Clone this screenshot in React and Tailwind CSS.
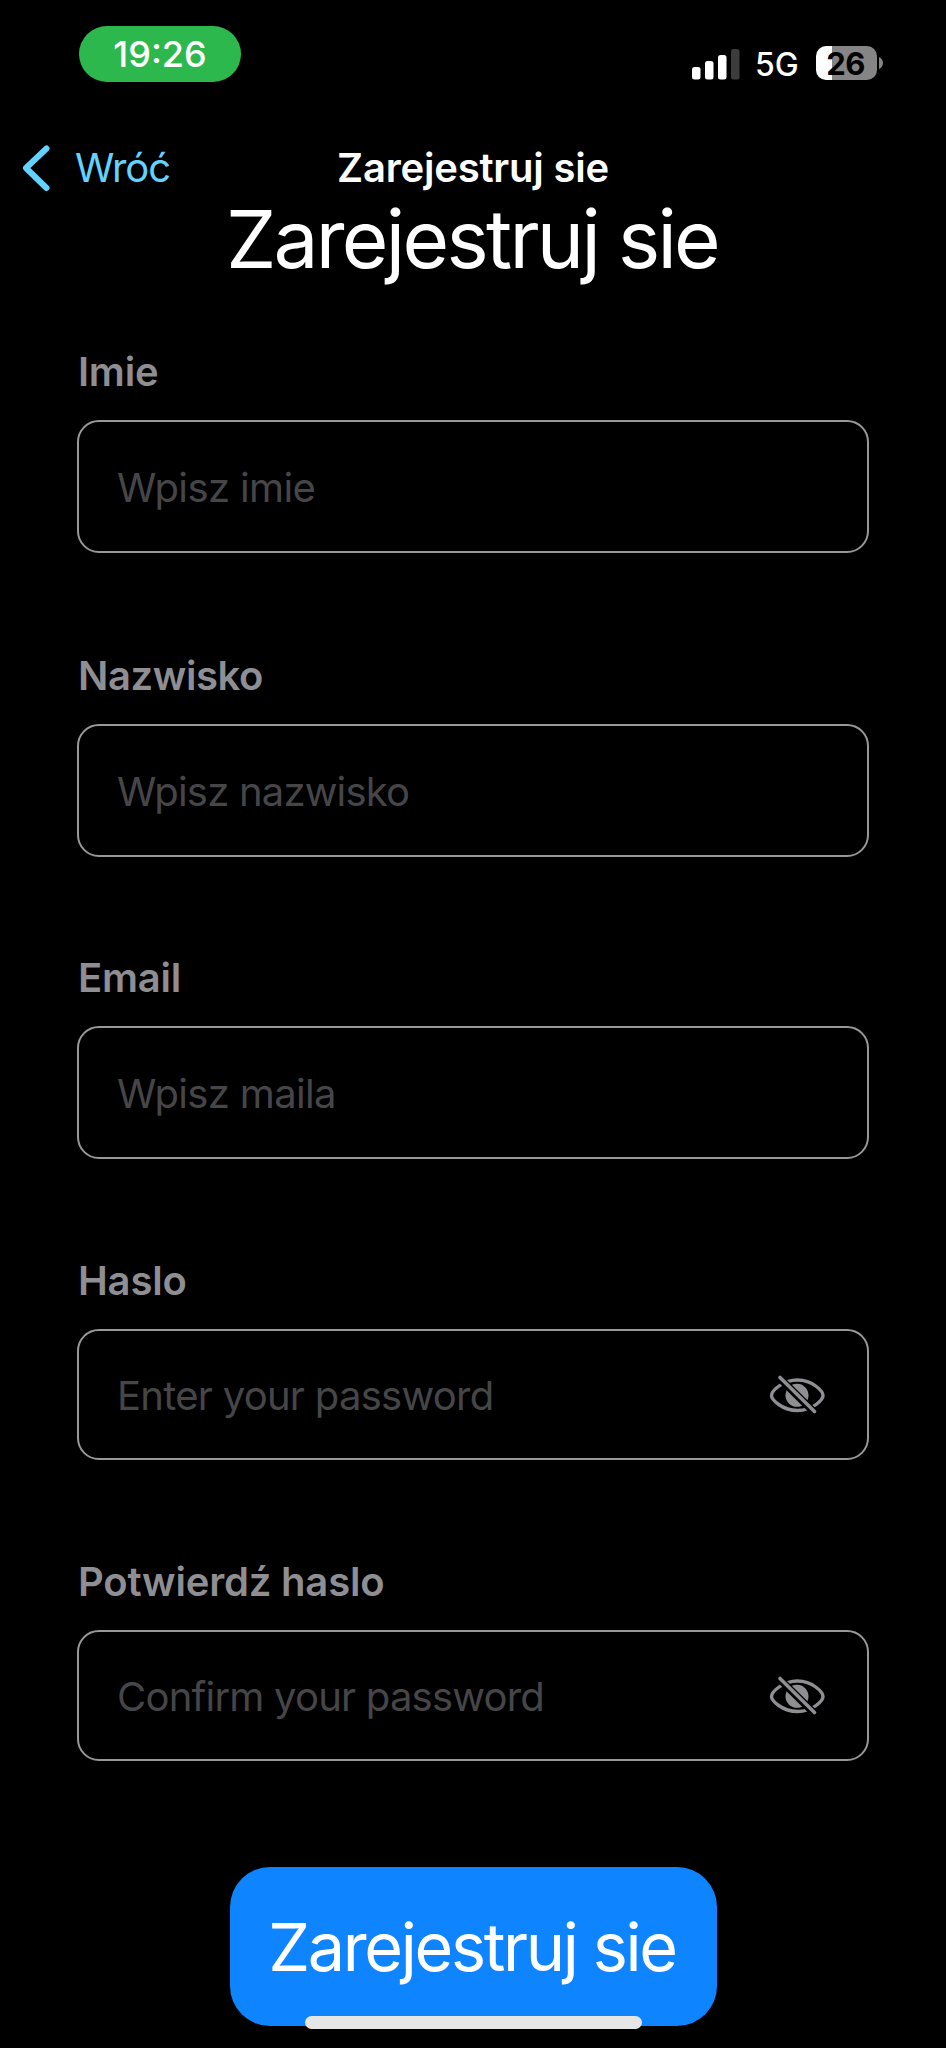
const FIELDS = [
  { label: 'Imie', placeholder: 'Wpisz imie', box: 'h-[133px]', gap: 'mb-[99px]', track: 'tracking-[-0.2px]', ptrack: 'tracking-[-0.62px]' },
  { label: 'Nazwisko', placeholder: 'Wpisz nazwisko', box: 'h-[133px]', gap: 'mb-[97px]', track: 'tracking-[-0.4px]', ptrack: 'tracking-[-0.8px]' },
  { label: 'Email', placeholder: 'Wpisz maila', box: 'h-[133px]', gap: 'mb-[98px]', track: 'tracking-[-0.2px]', ptrack: 'tracking-[-0.65px]' },
  { label: 'Haslo', placeholder: 'Enter your password', box: 'h-[131px]', gap: 'mb-[98px]', track: 'tracking-[-0.2px]', ptrack: 'tracking-[-0.72px]', secret: true },
  { label: 'Potwierdź haslo', placeholder: 'Confirm your password', box: 'h-[131px]', gap: 'mb-[106px]', track: 'tracking-[-0.2px]', ptrack: 'tracking-[-0.78px]', secret: true },
];

function SignalBars() {
  return (
    <svg className="mt-[2px] h-[31px] w-[48px]" viewBox="0 0 48 31">
      <rect x="0" y="18" width="8.5" height="12.5" rx="2.5" fill="#fff" />
      <rect x="13" y="12" width="8.5" height="18.5" rx="2.5" fill="#fff" />
      <rect x="26" y="6" width="8.5" height="24.5" rx="2.5" fill="#fff" />
      <rect x="39" y="0" width="8.5" height="30.5" rx="2.5" fill="#3c3c3c" />
    </svg>
  );
}

function EyeSlash() {
  return (
    <svg className="mt-px h-[44px] w-[58px]" viewBox="0 0 58 44" fill="none">
      <path
        d="M2.5 22.5C2.5 18.5 13 7 28.5 7S54 18.5 54 22.5S44 37.5 28.5 37.5S2.5 26.5 2.5 22.5Z"
        stroke="#8e8e93"
        strokeWidth="3.4"
      />
      <circle cx="28" cy="22.3" r="11.5" fill="#8e8e93" />
      <path d="M7.5 2L48.5 42.5" stroke="#000" strokeWidth="7.6" />
      <path d="M11 4.5L45.5 38.5" stroke="#8e8e93" strokeWidth="3.6" strokeLinecap="round" />
    </svg>
  );
}

function StatusBar() {
  return (
    <div className="flex items-start justify-between pr-[63px] pl-[79px] pt-[26px]">
      <div className="flex h-[56px] w-[162px] items-center justify-center rounded-full bg-[#2db84d] text-[36px] font-medium leading-none">
        19:26
      </div>
      <div className="mt-[20px] flex h-[34px] items-center">
        <SignalBars />
        <span className="ml-[15px] mt-[3px] w-[46px] text-[32px] font-medium leading-none">5G</span>
        <div className="ml-[15px] flex h-[34px] w-[61px] items-center justify-center rounded-[10px] bg-[linear-gradient(90deg,#fff_0_16px,#858585_16px)] pr-[2px] text-[31px] font-bold leading-none tracking-[-0.5px] text-black">
          26
        </div>
        <svg className="ml-[2px] h-[12px] w-[4px]" viewBox="0 0 4 12">
          <path d="M0 0C2.5 1 4 3.5 4 6S2.5 11 0 12Z" fill="#858585" />
        </svg>
      </div>
    </div>
  );
}

function Field({ label, placeholder, box, gap, track, ptrack, secret }) {
  return (
    <div className={`${gap} flex flex-col gap-[24px]`}>
      <span className={`${track} pl-[1px] text-[40px] font-semibold leading-[48px] text-[#8e8e93]`}>{label}</span>
      <div className={`${box} flex items-center justify-between rounded-[22px] border-[2px] border-[#989898] pr-[40px] pl-[38px]`}>
        <span className={`${ptrack} pt-[2px] whitespace-nowrap text-[40px] leading-[48px] text-[#464649]`}>{placeholder}</span>
        {secret && <EyeSlash />}
      </div>
    </div>
  );
}

export default function App() {
  return (
    <div className="relative flex h-[2048px] w-[946px] flex-col overflow-hidden bg-black font-['Inter',sans-serif] text-white">
      <StatusBar />
      <header className="mt-[62px] grid h-[47px] grid-cols-[1fr_auto_1fr] items-center">
        <button className="flex items-center pl-[21px] text-[#64d2ff]">
          <svg className="h-[47px] w-[30px]" viewBox="0 0 30 47" fill="none">
            <path d="M25.5 3.5L5 23L25.5 43" stroke="currentColor" strokeWidth="6" strokeLinecap="round" strokeLinejoin="round" />
          </svg>
          <span className="ml-[24px] text-[40px] leading-[48px] tracking-[-1.1px]">Wróć</span>
        </button>
        <span className="text-[40px] font-semibold leading-[48px] tracking-[-0.2px]">Zarejestruj sie</span>
        <span />
      </header>
      <h1 className="pr-[2px] text-center text-[80px] leading-[96px] tracking-[-2.7px]">Zarejestruj sie</h1>
      <form className="mt-[61px] flex flex-col px-[77px]">
        {FIELDS.map((f) => (
          <Field key={f.label} {...f} />
        ))}
      </form>
      <button type="button" className="flex h-[159px] w-[487px] shrink-0 items-center justify-center self-center rounded-[40px] bg-[#0e84ff] pt-[2px] pr-[2px] text-[66.5px] leading-none tracking-[-2.35px] whitespace-nowrap">
        Zarejestruj sie
      </button>
      <div className="absolute bottom-[19px] left-[305px] h-[13px] w-[337px] rounded-full bg-[#e6e6e6]" />
    </div>
  );
}
